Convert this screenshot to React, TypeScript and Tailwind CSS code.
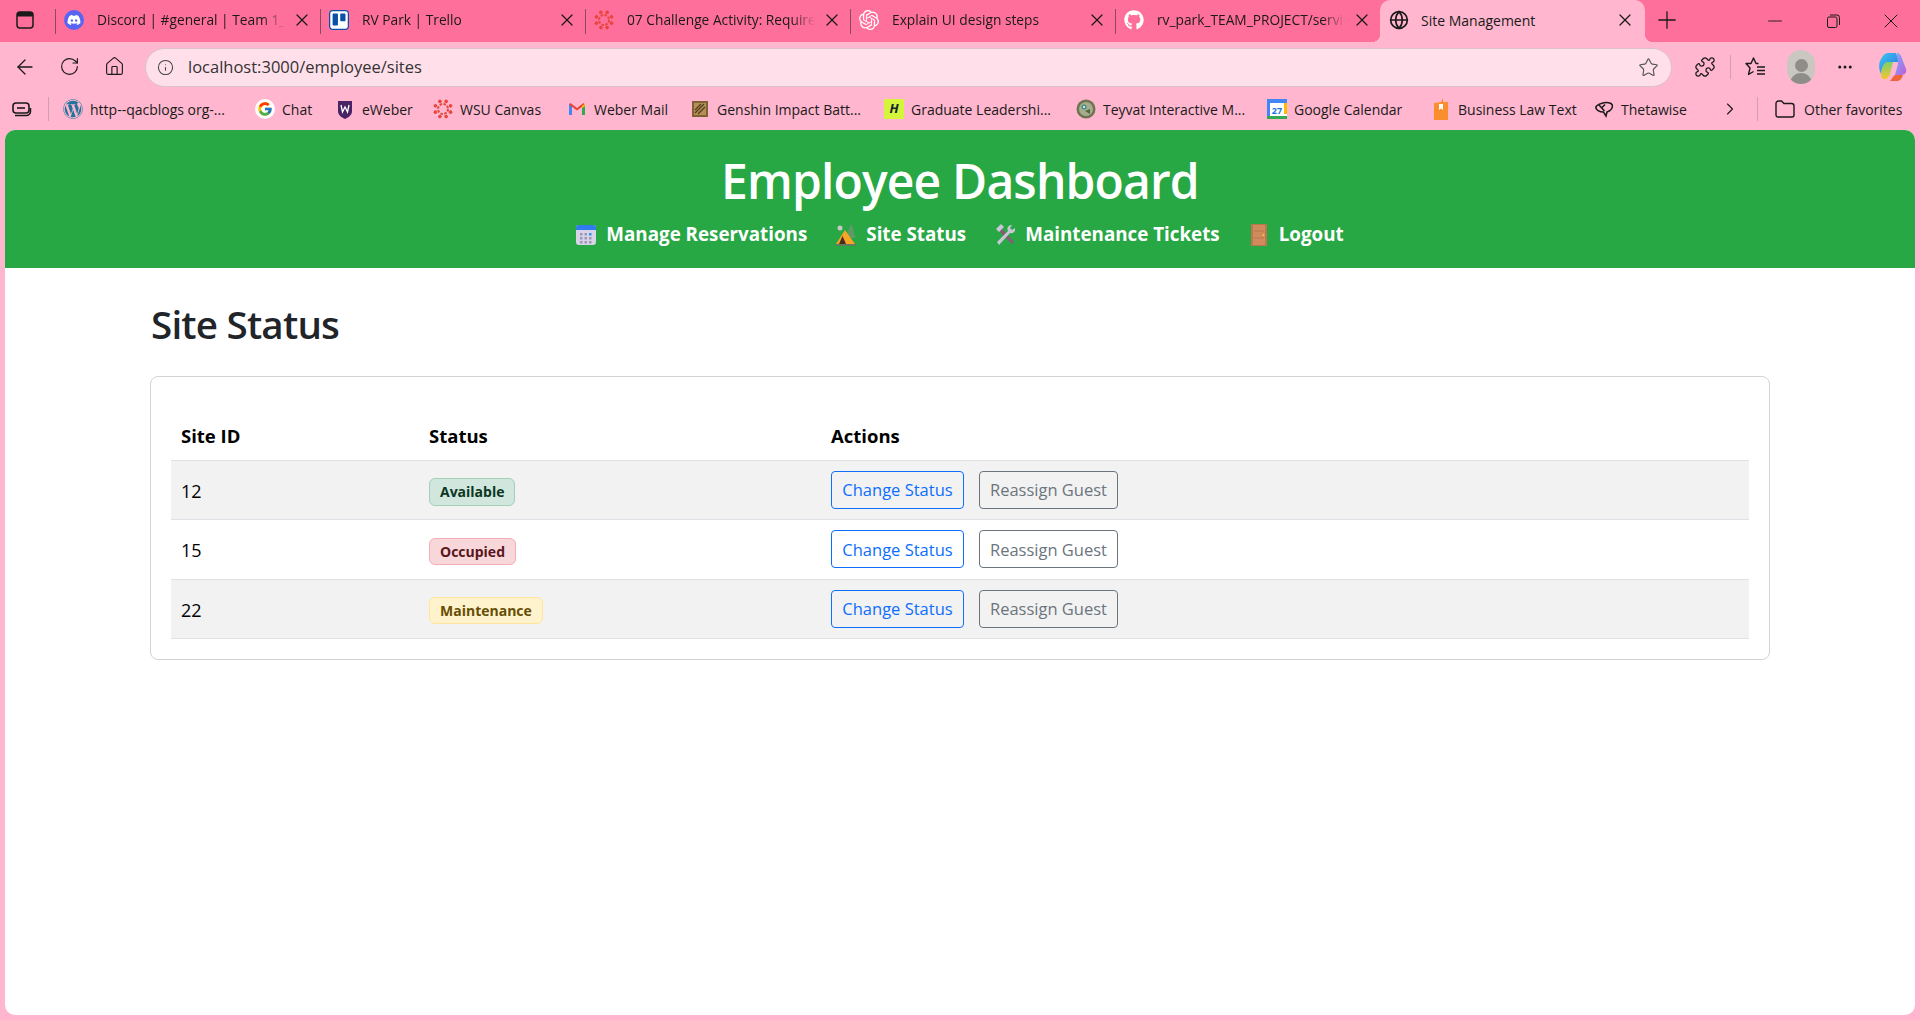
import { ArrowLeft, ChevronRight, Ellipsis, Globe, House, Info, Minus, Plus, Puzzle, RotateCw, Star, X } from 'lucide-react';
import { FaDiscord, FaGithub, FaTrello, FaWordpress } from 'react-icons/fa';
import { FcGoogle } from 'react-icons/fc';
import { SiOpenai } from 'react-icons/si';

function SidebarIcon() {
  return (
    <svg width="18" height="18" viewBox="0 0 18 18" fill="none">
      <rect x="1" y="1" width="16" height="16" rx="3" stroke="#1a1a1a" strokeWidth="1.5" />
      <path d="M1 5.5V4a3 3 0 0 1 3-3h10a3 3 0 0 1 3 3v1.500z" fill="#1a1a1a" />
    </svg>
  );
}

function CanvasLogo({ size = 20 }: { size?: number }) {
  const dots = [0, 45, 90, 135, 180, 225, 270, 315];
  return (
    <svg width={size} height={size} viewBox="0 0 20 20">
      <circle cx="10" cy="10" r="5" fill="none" stroke="#e8453c" strokeWidth="2" strokeDasharray="2.500 1.400" />
      {dots.map((d) => (
        <circle key={d} cx={10 + 8.200 * Math.cos(((d + 22.500) * Math.PI) / 180)} cy={10 + 8.200 * Math.sin(((d + 22.500) * Math.PI) / 180)} r="1.800" fill="#e8453c" />
      ))}
    </svg>
  );
}

function GmailIcon() {
  return (
    <svg width="18" height="14" viewBox="0 0 18 14">
      <path d="M1 13V2l3 2v9z" fill="#4285f4" />
      <path d="M14 13V4l3-2v11z" fill="#34a853" />
      <path d="M1 2.500 2.500 1 9 6l6.500-5L17 2.500 9 8.500z" fill="#ea4335" />
      <path d="M14 4l3-2.500V4l-3 2.200z" fill="#fbbc04" />
    </svg>
  );
}

function WeberIcon() {
  return (
    <svg width="14" height="19" viewBox="0 0 14 19">
      <path d="M0 1h14v10c0 4-3 6-7 8-4-2-7-4-7-8z" fill="#492365" />
      <path d="M3 5l1.500 7L7 7l2.500 5L11 5" fill="none" stroke="#fff" strokeWidth="1.300" />
    </svg>
  );
}

function GenshinIcon() {
  return (
    <svg width="18" height="18" viewBox="0 0 18 18">
      <path d="M1 1h16v16H1z" fill="#7f6234" />
      <rect x="3" y="3" width="12" height="12" fill="#b68f58" />
      <path d="M4 13 13 4M7 14l7-7M4 10l6-6" stroke="#4b3a1c" strokeWidth="1.200" />
    </svg>
  );
}

function TeyvatIcon() {
  return (
    <svg width="20" height="20" viewBox="0 0 20 20">
      <circle cx="10" cy="10" r="9.500" fill="#6f7350" />
      <circle cx="10" cy="10" r="7" fill="#a7ac8d" />
      <circle cx="8" cy="8" r="2.500" fill="#3f8f8a" />
      <circle cx="8" cy="8" r="1" fill="#fff" />
      <path d="M9 12l5-2 0 5z" fill="#4f6a3a" />
    </svg>
  );
}

function CalendarFav() {
  return (
    <svg width="20" height="20" viewBox="0 0 20 20">
      <rect width="20" height="20" fill="#fff" />
      <path d="M0 0h20v4H0z" fill="#4285f4" />
      <path d="M0 4h3v13H0z" fill="#4285f4" />
      <path d="M17 4h3v11h-3z" fill="#fbbc04" />
      <path d="M0 17h20v3H0z" fill="#34a853" />
      <text x="10" y="14.500" fontSize="9" fontWeight="700" textAnchor="middle" fill="#1a73e8" fontFamily="Open Sans, sans-serif">27</text>
    </svg>
  );
}

function BookIcon() {
  return (
    <svg width="14" height="22" viewBox="0 0 14 22">
      <path d="M0 5 7 4 9 0v4h5v18H0z" fill="#fb8e2c" />
      <path d="M5 6h4v6L7 10.500 5 12z" fill="#fff" />
    </svg>
  );
}

function ThetaIcon() {
  return (
    <svg width="20" height="18" viewBox="0 0 20 18" fill="none" stroke="#1a1a1a" strokeWidth="1.500">
      <path d="M2 6.500C5 3 12 1.500 17 3.500c2.500 1.500 1.500 5-1 7l-3 1.500-1 4-2.500-4C6 12 1 10 2 6.500z" />
      <path d="M5 5l5.500 6M8 7.500l3-3" />
    </svg>
  );
}

function FolderIcon() {
  return (
    <svg width="20" height="18" viewBox="0 0 20 18" fill="none" stroke="#1a1a1a" strokeWidth="1.400">
      <path d="M1 3.500A2.500 2.500 0 0 1 3.500 1h3L9 3.500h7.500A2.500 2.500 0 0 1 19 6v9a2 2 0 0 1-2 2H3a2 2 0 0 1-2-2z" />
    </svg>
  );
}

function CollectionsIcon() {
  return (
    <svg width="20" height="15" viewBox="0 0 20 15" fill="none" stroke="#1a1a1a">
      <rect x="1" y="1" width="16" height="10" rx="3" strokeWidth="1.600" />
      <path d="M5 6h8" strokeWidth="1.600" />
      <path d="M3 13.500h11a4 4 0 0 0 4.500-4V6" strokeWidth="1.500" />
    </svg>
  );
}

function FavoritesIcon() {
  return (
    <svg width="22" height="22" viewBox="0 0 22 22" fill="none" stroke="#1a1a1a" strokeWidth="1.400" strokeLinejoin="round">
      <path d="M13.500 7.500H11L8.500 2 6 7.500H1l4 4.500L3.500 18.500l5-3" />
      <path d="M12 11h8M12 14.500h8M12 18h8" />
    </svg>
  );
}

function RestoreIcon() {
  return (
    <svg width="13" height="14" viewBox="0 0 13 14" fill="none" stroke="#1a1a1a" strokeWidth="1">
      <rect x="0.500" y="3" width="9.500" height="10.500" rx="1.500" />
      <path d="M3 1h7a2.500 2.500 0 0 1 2.500 2.500V11" />
    </svg>
  );
}

function CopilotIcon() {
  return (
    <svg width="28" height="30" viewBox="0 0 28 30">
      <defs>
        <linearGradient id="cpa" x1="0" y1="0" x2="1" y2="1">
          <stop offset="0" stopColor="#38c8f0" />
          <stop offset="1" stopColor="#2f6fe0" />
        </linearGradient>
        <linearGradient id="cpb" x1="0" y1="0" x2="1" y2="1">
          <stop offset="0" stopColor="#6fb0ff" />
          <stop offset="1" stopColor="#c45ad8" />
        </linearGradient>
        <linearGradient id="cpc" x1="0" y1="0" x2="0" y2="1">
          <stop offset="0" stopColor="#7bd06a" />
          <stop offset="1" stopColor="#f7c52e" />
        </linearGradient>
      </defs>
      <path d="M9 1h8l3 9H9C6 10 3 14 2 22 0 18-1 12 2 7c2-4 4-6 7-6z" fill="url(#cpa)" />
      <path d="M18 1c2 0 3 1 4 3l5 13c1 3-1 6-5 6h-6l3-11z" fill="url(#cpb)" />
      <path d="M2 22c1-7 3-12 7-12h5l-3 12c-1 4-4 6-6 5-2 0-3-2-3-5z" fill="url(#cpc)" />
      <path d="M11 29h8c3-1 4-3 5-6h-8c-2 1-3 4-5 6z" fill="#f0643c" />
    </svg>
  );
}

function CalendarEmoji() {
  return (
    <svg width="20" height="22" viewBox="0 0 20 22">
      <rect x="0" y="1" width="20" height="20" rx="3" fill="#d8d4e8" />
      <path d="M0 6V4a3 3 0 0 1 3-3h14a3 3 0 0 1 3 3v2z" fill="#2f7cf0" />
      {[4, 8.500, 13].map((x) =>
        [9, 13, 17].map((y) => <rect key={`${x}-${y}`} x={x} y={y} width="2.500" height="2.500" fill={x === 13 && y === 9 ? '#2f90f0' : '#9c96b4'} />),
      )}
    </svg>
  );
}

function CampEmoji() {
  return (
    <svg width="20" height="22" viewBox="0 0 20 22">
      <circle cx="4" cy="4" r="2.500" fill="#c8c8c8" />
      <path d="M15 0l3.500 7H17l3 7H9z" fill="#5c9a66" />
      <path d="M0 19h20v3H0z" fill="#5e7d5a" />
      <path d="M9 6 19 20H0z" fill="#f7a524" />
      <path d="M6.500 12 10 20H3z" fill="#4a2b20" />
    </svg>
  );
}

function ToolsEmoji() {
  return (
    <svg width="20" height="22" viewBox="0 0 20 22">
      <path d="M3 3l3 1 13 14-2 2L4 7z" fill="#8a5a78" />
      <path d="M1 5 6 0l3 3-5 5z" fill="#c9c6d6" />
      <path d="M17 1a4 4 0 0 0-4 6L2 18l2 3L15 9a4 4 0 0 0 5-5l-3 2-2-2z" fill="#c9c6d6" />
    </svg>
  );
}

function DoorEmoji() {
  return (
    <svg width="16" height="22" viewBox="0 0 16 22">
      <rect width="16" height="22" fill="#b9784c" />
      <rect x="2" y="1" width="12" height="20" fill="#d08a5c" />
      <path d="M3 7h10M3 14h10" stroke="#b9784c" strokeWidth="1" />
      <circle cx="12.500" cy="11" r="1" fill="#f5c542" />
    </svg>
  );
}

const tabs = [
  { title: 'Discord | #general | Team 1_Gro', icon: <span className="flex w-5 h-5 rounded-full bg-[#5865f2] items-center justify-center"><FaDiscord className="w-3.5 h-3.5 text-white" /></span> },
  { title: 'RV Park | Trello', icon: <span className="flex w-5 h-5 rounded-[4px] bg-[#0c4fa8] items-center justify-center"><FaTrello className="w-5 h-5 text-white" /></span> },
  { title: '07 Challenge Activity: Requirem', icon: <CanvasLogo /> },
  { title: 'Explain UI design steps', icon: <SiOpenai className="w-5 h-5 text-white" /> },
  { title: 'rv_park_TEAM_PROJECT/services', icon: <FaGithub className="w-5 h-5 text-white" /> },
];

const bookmarks = [
  { name: 'http--qacblogs org-...', width: 'w-[192px]', icon: <FaWordpress className="w-5 h-5 text-[#21759b]" /> },
  { name: 'Chat', width: 'w-[80px]', icon: <span className="flex w-5 h-5 rounded-full bg-white items-center justify-center"><FcGoogle className="w-4 h-4" /></span> },
  { name: 'eWeber', width: 'w-[98px]', icon: <WeberIcon /> },
  { name: 'WSU Canvas', width: 'w-[134px]', icon: <CanvasLogo /> },
  { name: 'Weber Mail', width: 'w-[123px]', icon: <GmailIcon /> },
  { name: 'Genshin Impact Batt...', width: 'w-[194px]', icon: <GenshinIcon /> },
  { name: 'Graduate Leadershi...', width: 'w-[192px]', icon: <span className="flex w-5 h-5 bg-[#d4f53c] items-center justify-center text-[13px] font-bold italic text-[#123]">H</span> },
  { name: 'Teyvat Interactive M...', width: 'w-[191px]', icon: <TeyvatIcon /> },
  { name: 'Google Calendar', width: 'w-[164px]', icon: <CalendarFav /> },
  { name: 'Business Law Text', width: 'w-[163px]', icon: <BookIcon /> },
  { name: 'Thetawise', width: 'w-[118px]', icon: <ThetaIcon /> },
];

const navLinks = [
  { label: 'Manage Reservations', icon: <CalendarEmoji /> },
  { label: 'Site Status', icon: <CampEmoji /> },
  { label: 'Maintenance Tickets', icon: <ToolsEmoji /> },
  { label: 'Logout', icon: <DoorEmoji /> },
];

const sites = [
  { id: 12, status: 'Available', badge: 'bg-[#d1e7dd] border-[#a3cfbb] text-[#0a3622]', height: 'h-[28px]', striped: true },
  { id: 15, status: 'Occupied', badge: 'bg-[#f8d7da] border-[#f1aeb5] text-[#58151c]', height: 'h-[27px]', striped: false },
  { id: 22, status: 'Maintenance', badge: 'bg-[#fff3cd] border-[#ffe69c] text-[#664d03]', height: 'h-[27px]', striped: true },
];

export default function App() {
  return (
    <div className="h-[1020px] flex flex-col overflow-hidden bg-[#ffb6ce] text-[#1a1a1a] font-['Open_Sans',sans-serif]">
      {/* Tab strip */}
      <div className="h-[42px] shrink-0 flex items-center bg-[#ff6f9b]">
        <div className="w-[55px] flex justify-center pr-[6px] mb-[2px]">
          <SidebarIcon />
        </div>
        {tabs.map((tab) => (
          <div key={tab.title} className="w-[265px] h-full flex items-center relative">
            <div className="w-px h-[25px] bg-[#8a4a60]" />
            <div className="w-[33px] flex justify-center ml-px mb-[2px]">{tab.icon}</div>
            <div className="w-[188px] ml-[7px] mb-[2px] text-[13.750px] whitespace-nowrap overflow-hidden [mask-image:linear-gradient(to_right,black_88%,transparent)]">{tab.title}</div>
            <X className="w-[20px] h-[20px] ml-[7px] mb-[2px]" strokeWidth={1.500} />
          </div>
        ))}
        <div className="w-[265px] h-full flex items-center relative rounded-t-[10px] bg-[#ffb6ce]">
          <span className="absolute -left-2 bottom-0 w-2 h-2 bg-[radial-gradient(circle_at_0_0,#ff6f9b_8px,#ffb6ce_8px)]" />
          <span className="absolute -right-2 bottom-0 w-2 h-2 bg-[radial-gradient(circle_at_100%_0,#ff6f9b_8px,#ffb6ce_8px)]" />
          <Globe className="w-5 h-5 ml-[9px] mb-[2px]" />
          <div className="ml-[12px] mb-[2px] w-[194px] text-[14px] whitespace-nowrap">Site Management</div>
          <X className="w-[20px] h-[20px] mb-[2px]" strokeWidth={1.500} />
        </div>
        <Plus className="w-[28px] h-[28px] ml-[8px] mb-[2px]" strokeWidth={1.100} />
        <div className="ml-auto flex items-center">
          <div className="w-[58px] flex justify-center"><Minus className="w-[22px] h-[22px]" strokeWidth={1} /></div>
          <div className="w-[58px] flex justify-center"><RestoreIcon /></div>
          <div className="w-[58px] flex justify-center"><X className="w-[24px] h-[24px]" strokeWidth={1} /></div>
        </div>
      </div>

      {/* Address bar */}
      <div className="h-[46px] shrink-0 flex items-center pt-[3px]">
        <div className="w-[145px] flex items-center">
          <ArrowLeft className="w-[24px] h-[24px] ml-[13px]" strokeWidth={1.300} />
          <RotateCw className="w-[21px] h-[21px] ml-[22px]" strokeWidth={1.300} />
          <House className="w-[21px] h-[21px] ml-[24px]" strokeWidth={1.300} />
        </div>
        <div className="w-[1527px] h-[39px] mt-[1px] flex items-center rounded-full bg-[#ffe0ea] border border-[#d9c2ca]">
          <Info className="w-[17px] h-[17px] ml-[11px] text-[#444]" strokeWidth={1.500} />
          <span className="ml-[14px] text-[16.500px] text-[#333]">localhost:3000/employee/sites</span>
          <Star className="w-[21px] h-[21px] ml-auto mr-[12px] text-[#555]" strokeWidth={1.300} />
        </div>
        <Puzzle className="w-[22px] h-[22px] ml-[22px]" strokeWidth={1.400} />
        <div className="w-px h-[24px] bg-[#cfa1b0] ml-[14px]" />
        <div className="ml-[14px]"><FavoritesIcon /></div>
        <div className="ml-[20px] w-[28px] h-[34px] rounded-full bg-[#c9c7c0] flex flex-col items-center justify-end overflow-hidden">
          <span className="w-[13px] h-[13px] rounded-full bg-[#8f8d87] mb-[1px]" />
          <span className="w-[22px] h-[11px] rounded-t-full bg-[#8f8d87]" />
        </div>
        <Ellipsis className="w-[18px] h-[18px] ml-[21px]" />
        <div className="ml-[25px]"><CopilotIcon /></div>
      </div>

      {/* Favorites bar */}
      <div className="h-[42px] shrink-0 flex items-center">
        <div className="w-[48px] pl-[12px]"><CollectionsIcon /></div>
        <div className="w-px h-[24px] bg-[#cfa1b0]" />
        <div className="flex items-center pl-[14px]">
          {bookmarks.map((b) => (
            <div key={b.name} className={`${b.width} flex items-center`}>
              <div className="w-[20px] flex justify-center shrink-0">{b.icon}</div>
              <span className="ml-[7px] text-[14px] whitespace-nowrap">{b.name}</span>
            </div>
          ))}
        </div>
        <ChevronRight className="w-[20px] h-[20px] ml-[8px]" strokeWidth={1.300} />
        <div className="w-px h-[24px] bg-[#cfa1b0] ml-[17px]" />
        <div className="ml-[17px]"><FolderIcon /></div>
        <span className="ml-[9px] text-[14px] whitespace-nowrap">Other favorites</span>
      </div>

      {/* Page */}
      <div className="flex-1 mx-[5px] mb-[5px] rounded-[10px] overflow-hidden bg-white flex flex-col">
        <header className="h-[138px] bg-[#28a745] text-white text-center pt-[17px]">
          <h1 className="text-[48px] leading-[68px] font-semibold tracking-[-0.85px]">Employee Dashboard</h1>
          <nav className="flex justify-center items-center gap-[29px] mt-[6px]">
            {navLinks.map((link) => (
              <a key={link.label} href="#" className="flex items-center gap-[10px] text-[18.800px] leading-[27px] font-bold">
                <span className="w-[20px] flex justify-center">{link.icon}</span>
                {link.label}
              </a>
            ))}
          </nav>
        </header>

        <main className="px-[145px] pt-[32px]">
          <h2 className="text-[38.600px] leading-[48px] font-semibold tracking-[-0.8px] text-[#212529] ml-px">Site Status</h2>
          <div className="mt-[28px] pt-[35px] px-[20px] pb-[20px] border border-[#d3d3d3] rounded-[8px]">
            <table className="w-full table-fixed border-collapse text-black">
              <thead>
                <tr className="h-[48px] border-b border-[#dee2e6]">
                  <th className="w-[248px] px-[10px] text-left text-[18.500px] font-bold">Site ID</th>
                  <th className="w-[402px] px-[10px] text-left text-[18.500px] font-bold">Status</th>
                  <th className="px-[10px] text-left text-[18.500px] font-bold">Actions</th>
                </tr>
              </thead>
              <tbody>
                {sites.map((site) => (
                  <tr key={site.id} className={`h-[59.500px] border-b border-[#dee2e6] ${site.striped ? 'bg-[#f2f2f2]' : 'bg-white'}`}>
                    <td className="px-[10px] pt-[3px] text-[18px]">{site.id}</td>
                    <td className="px-[10px] pt-[4px]">
                      <span className={`inline-flex items-center px-[10px] border rounded-[6px] text-[14px] font-bold ${site.height} ${site.badge}`}>{site.status}</span>
                    </td>
                    <td className="px-[10px]">
                      <div className="flex gap-[15px]">
                        <button className="w-[133px] h-[38px] pt-[2px] border border-[#0d6efd] rounded-[4px] text-[16.500px] text-[#0d6efd]">Change Status</button>
                        <button className="w-[139px] h-[38px] pt-[2px] border border-[#6c757d] rounded-[4px] text-[16.500px] text-[#6c757d]">Reassign Guest</button>
                      </div>
                    </td>
                  </tr>
                ))}
              </tbody>
            </table>
          </div>
        </main>
      </div>
    </div>
  );
}
